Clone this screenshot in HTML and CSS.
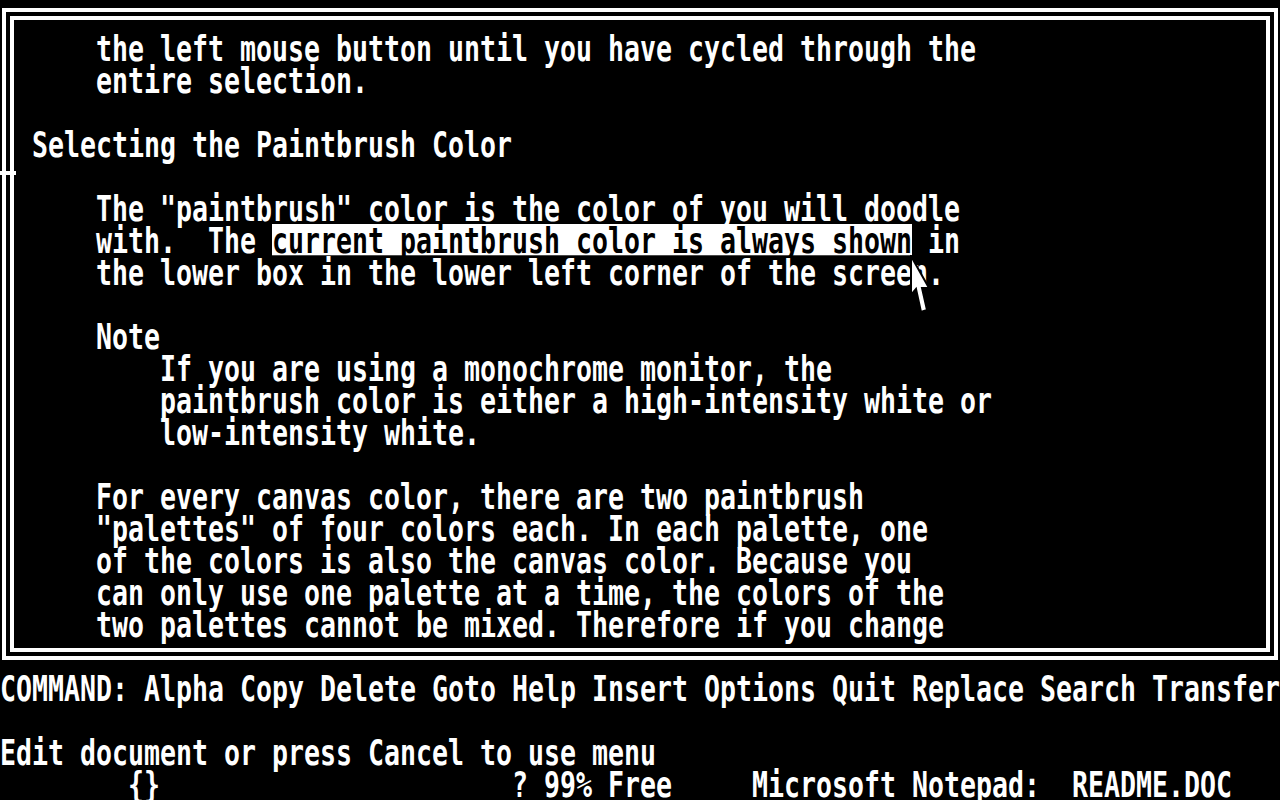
FILE: index.html
```html
<!DOCTYPE html>
<html lang="en">
<head>
<meta charset="utf-8">
<title>Microsoft Notepad: README.DOC</title>
<link rel="stylesheet" href="styles.css">
</head>
<body>
<div class="screen">
  <div class="frame">
    <div class="pane">
      <div class="row"><span class="txt">     the left mouse button until you have cycled through the</span></div>
      <div class="row"><span class="txt">     entire selection.</span></div>
      <div class="row"><span class="txt"> </span></div>
      <div class="row"><span class="txt"> Selecting the Paintbrush Color</span></div>
      <div class="row"><span class="txt"> </span></div>
      <div class="row"><span class="txt">     The "paintbrush" color is the color of you will doodle</span></div>
      <div class="row"><span class="txt">     with.  The <span class="hl">current paintbrush color is always shown</span> in</span></div>
      <div class="row"><span class="txt">     the lower box in the lower left corner of the screen.</span></div>
      <div class="row"><span class="txt"> </span></div>
      <div class="row"><span class="txt">     Note</span></div>
      <div class="row"><span class="txt">         If you are using a monochrome monitor, the</span></div>
      <div class="row"><span class="txt">         paintbrush color is either a high-intensity white or</span></div>
      <div class="row"><span class="txt">         low-intensity white.</span></div>
      <div class="row"><span class="txt"> </span></div>
      <div class="row"><span class="txt">     For every canvas color, there are two paintbrush</span></div>
      <div class="row"><span class="txt">     "palettes" of four colors each. In each palette, one</span></div>
      <div class="row"><span class="txt">     of the colors is also the canvas color. Because you</span></div>
      <div class="row"><span class="txt">     can only use one palette at a time, the colors of the</span></div>
      <div class="row"><span class="txt">     two palettes cannot be mixed. Therefore if you change</span></div>
    </div>
  </div>
  <div class="status">
    <div class="row"><span class="txt">COMMAND: Alpha Copy Delete Goto Help Insert Options Quit Replace Search Transfer</span></div>
    <div class="row"><span class="txt"> </span></div>
    <div class="row"><span class="txt">Edit document or press Cancel to use menu</span></div>
    <div class="row"><span class="txt">        {}                      ? 99% Free     Microsoft Notepad:  README.DOC</span></div>
  </div>
  <div class="tick"></div>
  <svg class="pointer" width="22" height="60" viewBox="0 0 22 60">
    <polygon points="1,1 1,40 6,34 11,57 17,55 12,33 19,33" fill="#fff" stroke="#000" stroke-width="2"/>
  </svg>
</div>
</body>
</html>
```
FILE: styles.css
```css
html, body {
  margin: 0;
  padding: 0;
  background: #000;
  overflow: hidden;
}

.screen {
  position: relative;
  box-sizing: border-box;
  width: 1280px;
  height: 800px;
  padding-top: 8px;
  background: #000;
  color: #fff;
  overflow: hidden;
}

.frame {
  box-sizing: border-box;
  margin: 0 2px;
  width: 1276px;
  height: 652px;
  border: 4px solid #fff;
  padding: 4px;
}

.pane {
  box-sizing: border-box;
  height: 636px;
  border: 4px solid #fff;
  padding: 12px 0 0 2px;
}

.status {
  margin-top: 12px;
}

.row {
  height: 32px;
}

.txt {
  display: block;
  height: 23.19px;
  line-height: 23.19px;
  transform: scaleY(1.36);
  transform-origin: 0 0;
  white-space: pre;
  font-family: "DejaVu Sans Mono", "Liberation Mono", monospace;
  font-weight: bold;
  font-size: 26.58px;
  color: #fff;
}

.hl {
  display: inline-block;
  vertical-align: top;
  height: 22.8px;
  background: #fff;
  color: #000;
}

.tick {
  position: absolute;
  left: 0;
  top: 171px;
  width: 16px;
  height: 4px;
  background: #fff;
}

.pointer {
  position: absolute;
  left: 910px;
  top: 255px;
}
```
